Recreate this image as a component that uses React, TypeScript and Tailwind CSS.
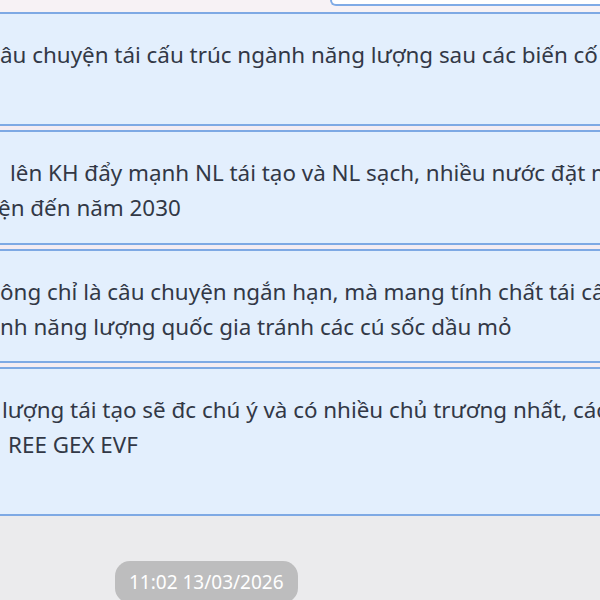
const blocks: { lines: { text: string; indent: string }[]; pb: string }[] = [
  {
    lines: [{ text: "âu chuyện tái cấu trúc ngành năng lượng sau các biến cố", indent: "pl-0" }],
    pb: "pb-[52px]",
  },
  {
    lines: [
      { text: "lên KH đẩy mạnh NL tái tạo và NL sạch, nhiều nước đặt mục", indent: "pl-[10px]" },
      { text: "ện đến năm 2030", indent: "-ml-[2px]" },
    ],
    pb: "pb-[18px]",
  },
  {
    lines: [
      { text: "ông chỉ là câu chuyện ngắn hạn, mà mang tính chất tái cấu", indent: "pl-0" },
      { text: "nh năng lượng quốc gia tránh các cú sốc dầu mỏ", indent: "pl-0" },
    ],
    pb: "pb-[17px]",
  },
  {
    lines: [
      { text: "lượng tái tạo sẽ đc chú ý và có nhiều chủ trương nhất, các", indent: "pl-[2px]" },
      { text: "REE GEX EVF", indent: "pl-[8px]" },
    ],
    pb: "pb-[52px]",
  },
];

export default function App() {
  return (
    <div className="w-[600px] h-[600px] overflow-hidden flex flex-col bg-[#ebebed] font-['Noto_Sans','Open_Sans',sans-serif] text-[#323846]">
      {/* previous bubble edge */}
      <div className="h-[12px] bg-[#f7f2f5] pl-[330px] flex items-start">
        <div className="w-full h-[6px] bg-white border-l-2 border-b-2 border-[#7fabe6] rounded-bl-[10px]" />
      </div>

      <div className="flex flex-col gap-[4px] bg-[#f4ecf2]">
        {blocks.map((b, i) => (
          <div
            key={i}
            className={`bg-[#e3effd] border-y-2 border-[#7ea9e4] pt-[23px] ${b.pb} overflow-hidden text-[22.4px] leading-[35px]`}
          >
            {b.lines.map((l, j) => (
              <div key={j} className={`whitespace-nowrap ${l.indent}`}>
                {l.text}
              </div>
            ))}
          </div>
        ))}
      </div>

      <div className="flex-1 relative">
        <div className="absolute left-[115px] top-[45px] h-[42px] px-[14px] rounded-[15px] bg-[#bdbdbe] text-white text-[19px] flex items-center">
          11:02 13/03/2026
        </div>
      </div>
    </div>
  );
}
